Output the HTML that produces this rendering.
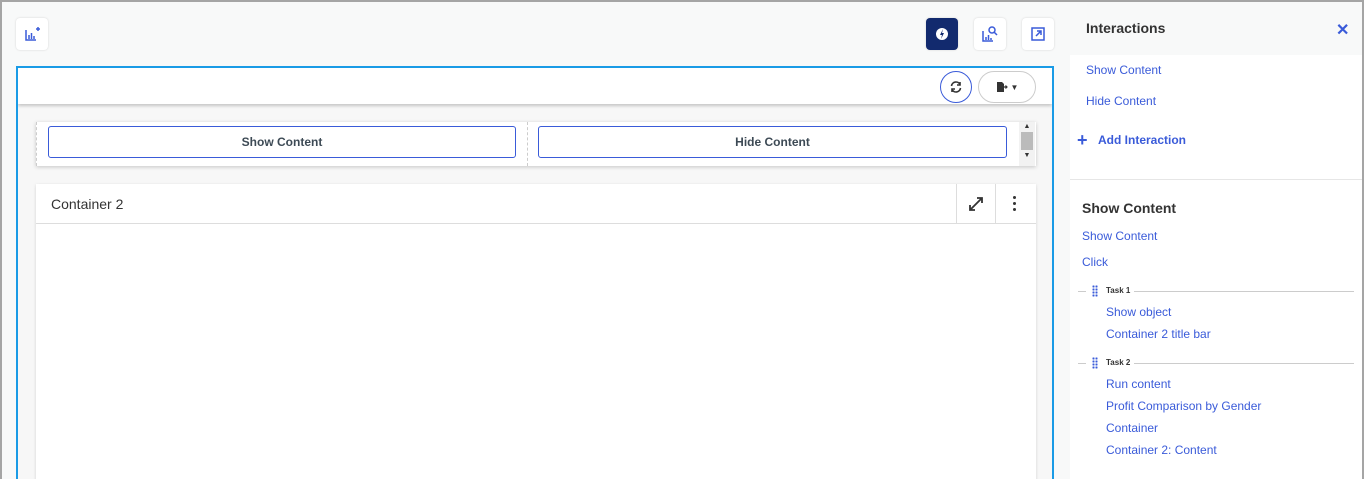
<!DOCTYPE html>
<html><head><style>
*{box-sizing:border-box;margin:0;padding:0}
html,body{width:1364px;height:479px;overflow:hidden}
body{background:#f8f9f9;font-family:"Liberation Sans",sans-serif;position:relative}
.frame{position:absolute;left:0;top:0;width:1364px;height:479px;border:2px solid #a5a5a5;border-bottom:none;pointer-events:none;z-index:10}
.ib{position:absolute;width:32px;height:32px;background:#fff;border-radius:4px;box-shadow:0 0 2px rgba(0,0,0,.15);display:flex;align-items:center;justify-content:center}
.a{position:absolute}
.lnk{position:absolute;font-size:12px;color:#3a5bd9}
.dots{position:absolute;width:6px;height:12px;background-image:radial-gradient(circle,#3a5bd9 1px,transparent 1.2px);background-size:3px 3px}
</style></head><body>
<div class="frame"></div>
<div class="ib" style="left:16px;top:18px"><svg width="16" height="16" viewBox="0 0 16 16" fill="none" stroke="#3a5bd9" stroke-width="1.5"><path d="M2 4v10h10M5 13V9M7.5 13V7M10 13V10M12 3h4M14 1v4"/></svg></div>
<div class="ib" style="left:926px;top:18px;background:#122a6e"><svg width="14" height="14" viewBox="0 0 14 14"><circle cx="7" cy="7" r="6" fill="#fff"/><path d="M8 2L5 8h2l-1 4 3-6H7z" fill="#122a6e"/></svg></div>
<div class="ib" style="left:974px;top:18px"><svg width="18" height="18" viewBox="0 0 18 18" fill="none" stroke="#3a5bd9" stroke-width="1.5"><path d="M2 6v10h10M5 15v-3M7.5 15v-5M10 15v-2"/><circle cx="11" cy="5" r="3"/><path d="M13 7l3 3"/></svg></div>
<div class="ib" style="left:1022px;top:18px"><svg width="14" height="14" viewBox="0 0 14 14" fill="none" stroke="#3a5bd9" stroke-width="1.5"><rect x="1" y="1" width="12" height="12"/><path d="M5 9l5-5M6 4h4v4"/></svg></div>

<div class="a" style="left:16px;top:66px;width:1038px;height:413px;border:2px solid #1a9be6;border-bottom:none;background:#f7f7f7;overflow:hidden">
 <div class="a" style="left:0;top:0;width:1034px;height:36px;background:#fff;box-shadow:0 2px 3px rgba(0,0,0,.2)">
  <div class="a" style="left:922px;top:3px;width:32px;height:32px;border:1px solid #3a5bd9;border-radius:50%;display:flex;align-items:center;justify-content:center"><svg width="14" height="14" viewBox="0 0 14 14" fill="none" stroke="#333" stroke-width="1.6"><path d="M2.5 6a4.5 4.5 0 0 1 8.5-1.5M11.5 8a4.5 4.5 0 0 1-8.5 1.5"/><path d="M11 2v3H8M3 12V9h3" /></svg></div>
  <div class="a" style="left:960px;top:3px;width:58px;height:32px;border:1px solid #ccc;border-radius:16px;display:flex;align-items:center;justify-content:center;gap:3px"><svg width="12" height="12" viewBox="0 0 12 12"><path d="M1 1h5l2 2v8H1z" fill="#333"/><path d="M7 6h4M9.5 4.5L11 6 9.5 7.5" stroke="#333" stroke-width="1.2" fill="none"/></svg><span style="font-size:8px;color:#333">▼</span></div>
 </div>
 <div class="a" style="left:18px;top:54px;width:1000px;height:44px;background:#fff;box-shadow:0 1px 4px rgba(0,0,0,.2);border-left:1px dashed #ccc">
  <div class="a" style="left:11px;top:4px;width:468px;height:32px;border:1px solid #3a5bd9;border-radius:3px;font-size:12px;font-weight:bold;color:#3d4a55;display:flex;align-items:center;justify-content:center">Show Content</div>
  <div class="a" style="left:490px;top:0;height:44px;border-left:1px dashed #ccc"></div>
  <div class="a" style="left:501px;top:4px;width:469px;height:32px;border:1px solid #3a5bd9;border-radius:3px;font-size:12px;font-weight:bold;color:#3d4a55;display:flex;align-items:center;justify-content:center">Hide Content</div>
  <div class="a" style="left:982px;top:0;width:16px;height:44px;background:#f2f2f2"><div style="font-size:7px;color:#333;text-align:center;line-height:10px">▲</div><div style="width:12px;height:18px;background:#bbb;margin:0 auto"></div><div style="font-size:7px;color:#333;text-align:center;line-height:12px">▼</div></div>
 </div>
 <div class="a" style="left:18px;top:116px;width:1000px;height:300px;background:#fff;box-shadow:0 1px 3px rgba(0,0,0,.15)">
  <div class="a" style="left:0;top:0;width:1000px;height:40px;border-bottom:1px solid #ddd"></div>
  <div class="a" style="left:15px;top:12px;font-size:14px;color:#333">Container 2</div>
  <div class="a" style="left:920px;top:0;width:40px;height:40px;border-left:1px solid #ddd;border-right:1px solid #ddd;display:flex;align-items:center;justify-content:center"><svg width="16" height="16" viewBox="0 0 16 16" fill="none" stroke="#333" stroke-width="1.8"><path d="M2 14L14 2M9 2h5v5M2 9v5h5"/></svg></div>
  <div class="a" style="left:977px;top:12px;width:4px"><div style="width:3px;height:3px;background:#333;border-radius:50%;margin-bottom:3px"></div><div style="width:3px;height:3px;background:#333;border-radius:50%;margin-bottom:3px"></div><div style="width:3px;height:3px;background:#333;border-radius:50%"></div></div>
 </div>
</div>

<div class="a" style="left:1070px;top:55px;width:292px;height:424px;background:#fff"></div>
<div class="a" style="left:1070px;top:179px;width:292px;border-top:1px solid #e6e6e6"></div>
<div class="a" style="left:1086px;top:20px;font-size:14px;font-weight:bold;color:#333">Interactions</div>
<div class="a" style="left:1336px;top:20px;font-size:16px;font-weight:bold;color:#3a5bd9">✕</div>
<div class="lnk" style="left:1086px;top:63px">Show Content</div>
<div class="lnk" style="left:1086px;top:94px">Hide Content</div>
<div class="a" style="left:1077px;top:131px;font-size:18px;font-weight:bold;color:#3a5bd9;line-height:18px">+</div>
<div class="a" style="left:1098px;top:133px;font-size:12px;font-weight:bold;color:#3a5bd9">Add Interaction</div>
<div class="a" style="left:1082px;top:200px;font-size:14px;font-weight:bold;color:#333">Show Content</div>
<div class="lnk" style="left:1082px;top:229px">Show Content</div>
<div class="lnk" style="left:1082px;top:255px">Click</div>
<div class="a" style="left:1078px;top:291px;width:8px;border-top:1px solid #ccc"></div>
<div class="dots" style="left:1092px;top:285px"></div>
<div class="a" style="left:1106px;top:286px;font-size:8px;font-weight:bold;color:#333">Task 1</div>
<div class="a" style="left:1134px;top:291px;width:220px;border-top:1px solid #ccc"></div>
<div class="lnk" style="left:1106px;top:305px">Show object</div>
<div class="lnk" style="left:1106px;top:327px">Container 2 title bar</div>
<div class="a" style="left:1078px;top:363px;width:8px;border-top:1px solid #ccc"></div>
<div class="dots" style="left:1092px;top:357px"></div>
<div class="a" style="left:1106px;top:358px;font-size:8px;font-weight:bold;color:#333">Task 2</div>
<div class="a" style="left:1134px;top:363px;width:220px;border-top:1px solid #ccc"></div>
<div class="lnk" style="left:1106px;top:377px">Run content</div>
<div class="lnk" style="left:1106px;top:399px">Profit Comparison by Gender</div>
<div class="lnk" style="left:1106px;top:421px">Container</div>
<div class="lnk" style="left:1106px;top:443px">Container 2: Content</div>
</body></html>
